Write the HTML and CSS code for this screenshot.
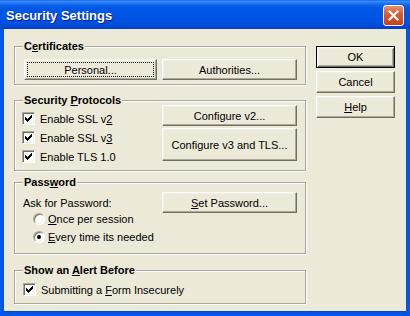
FILE: index.html
```html
<!DOCTYPE html>
<html lang="en">
<head>
  <meta charset="UTF-8" />
  <title>Security Settings</title>
  <link rel="stylesheet" href="styles.css">
</head>
<body>
  <div class="window">
    <div class="titlebar">
      <span class="title">Security Settings</span>
      <span class="close">
        <svg width="21" height="21" viewBox="0 0 21 21"><path d="M6.5 6.5l8 8M14.5 6.5l-8 8" stroke="#fff" stroke-width="2.2" stroke-linecap="square"/></svg>
      </span>
    </div>

    <div class="client">
      <div class="groups">
        <div class="group certs">
          <div class="group-title">C<u>e</u>rtificates</div>
          <div class="row">
            <button class="btn focused personal">Personal...</button>
            <button class="btn wide">Authorities...</button>
          </div>
        </div>

        <div class="group protocols">
          <div class="group-title">Security <u>P</u>rotocols</div>
          <div class="body">
            <div class="checks">
              <div class="check-row"><span class="box"><svg width="11" height="11" viewBox="0 0 11 11" shape-rendering="crispEdges"><path d="M2 4h1v3h-1zM3 5h1v3h-1zM4 6h1v3h-1zM5 5h1v3h-1zM6 4h1v3h-1zM7 3h1v3h-1zM8 2h1v3h-1z"/></svg></span><span>Enable SSL v<u>2</u></span></div>
              <div class="check-row"><span class="box"><svg width="11" height="11" viewBox="0 0 11 11" shape-rendering="crispEdges"><path d="M2 4h1v3h-1zM3 5h1v3h-1zM4 6h1v3h-1zM5 5h1v3h-1zM6 4h1v3h-1zM7 3h1v3h-1zM8 2h1v3h-1z"/></svg></span><span>Enable SSL v<u>3</u></span></div>
              <div class="check-row"><span class="box"><svg width="11" height="11" viewBox="0 0 11 11" shape-rendering="crispEdges"><path d="M2 4h1v3h-1zM3 5h1v3h-1zM4 6h1v3h-1zM5 5h1v3h-1zM6 4h1v3h-1zM7 3h1v3h-1zM8 2h1v3h-1z"/></svg></span><span>Enable TLS 1.0</span></div>
            </div>
            <div class="configs">
              <button class="btn">Configure v2...</button>
              <button class="btn tall">Configure v3 and TLS...</button>
            </div>
          </div>
        </div>

        <div class="group password">
          <div class="group-title">Pass<u>w</u>ord</div>
          <div class="ask">
            <span>Ask for Password:</span>
            <button class="btn wide"><span><u>S</u>et Password...</span></button>
          </div>
          <div class="radios">
            <div class="radio-row"><span class="radio"></span><span><u>O</u>nce per session</span></div>
            <div class="radio-row"><span class="radio on"></span><span><u>E</u>very time its needed</span></div>
          </div>
        </div>

        <div class="group alert">
          <div class="group-title">Show an <u>A</u>lert Before</div>
          <div class="check-row"><span class="box"><svg width="11" height="11" viewBox="0 0 11 11" shape-rendering="crispEdges"><path d="M2 4h1v3h-1zM3 5h1v3h-1zM4 6h1v3h-1zM5 5h1v3h-1zM6 4h1v3h-1zM7 3h1v3h-1zM8 2h1v3h-1z"/></svg></span><span>Submitting a <u>F</u>orm Insecurely</span></div>
        </div>
      </div>

      <div class="actions">
        <button class="btn default">OK</button>
        <button class="btn">Cancel</button>
        <button class="btn"><span><u>H</u>elp</span></button>
      </div>
    </div>
  </div>
</body>
</html>
```

FILE: styles.css
```css
* {
  box-sizing: border-box;
}
body {
  margin: 0;
  background: #fff;
  font-family: "Liberation Sans", Arial, sans-serif;
  font-size: 11px;
  color: #000;
}
.window {
  width: 410px;
  height: 316px;
  display: flex;
  flex-direction: column;
}
.titlebar {
  flex: none;
  height: 29px;
  display: flex;
  align-items: center;
  justify-content: space-between;
  padding: 2px 6px 0 6px;
  background: linear-gradient(to bottom, #0A5DE8 0px, #3E8CF7 1px, #2779F3 3px, #0F63EB 5px, #0058E6 8px, #0055E5 15px, #0052E0 22px, #0049D6 26px, #003DC5 29px);
}
.title {
  color: #fff;
  font-weight: bold;
  font-size: 13px;
  text-shadow: 1px 1px 0 #0A1E87;
}
.close {
  width: 21px;
  height: 21px;
  border: 1px solid #fff;
  border-radius: 3px;
  background: linear-gradient(to bottom, #E7906C, #D65A32 45%, #C8401C);
  display: flex;
  align-items: center;
  justify-content: center;
}
.close svg {
  margin: -1px;
}
.client {
  flex: 1;
  display: flex;
  gap: 10px;
  padding: 17px 11px 0 10px;
  background: #ECE9D8;
  border: 4px solid #0056E7;
  border-top: 0;
  box-shadow: inset 0 -1px 0 #0645C8;
}
.groups {
  width: 292px;
}
.actions {
  width: 79px;
  display: flex;
  flex-direction: column;
  gap: 3px;
}
.actions .btn {
  height: 22px;
}

/* group boxes */
.group {
  border: 1px solid #ACA899;
  box-shadow: inset 1px 1px 0 #fff, 1px 1px 0 #fff;
  padding: 0 8px;
}
.group-title {
  display: table;
  margin: -7px 0 -4px 0;
  padding: 0 1px;
  background: #ECE9D8;
  font-weight: bold;
  line-height: 13px;
}
.certs {
  padding-bottom: 4px;
}
.protocols {
  margin-top: 15px;
  padding-bottom: 4px;
}
.password {
  margin-top: 11px;
  padding-bottom: 7px;
}
.alert {
  margin-top: 16px;
  padding-bottom: 4px;
}

.certs .row {
  display: flex;
  gap: 5px;
  margin: 10px 0 0 1px;
}
.certs .btn {
  height: 21px;
}
.personal {
  width: 133px;
}
.wide {
  width: 135px;
  height: 21px;
}

.protocols .body {
  display: flex;
  justify-content: space-between;
  align-items: flex-start;
}
.checks {
  margin: 6px 0 0 -1px;
}
.check-row {
  height: 19px;
  display: flex;
  align-items: center;
  gap: 5px;
}
.alert .check-row {
  margin-top: 7px;
}
.configs {
  width: 135px;
  margin-top: 2px;
  display: flex;
  flex-direction: column;
  gap: 2px;
}
.configs .btn {
  height: 21px;
}
.configs .tall {
  height: 33px;
}

.ask {
  display: flex;
  justify-content: space-between;
  align-items: center;
  margin-top: 7px;
}
.radios {
  margin: -3px 0 0 10px;
}
.radio-row {
  height: 18px;
  display: flex;
  align-items: center;
  gap: 3px;
}

/* classic controls */
.btn {
  display: flex;
  align-items: center;
  justify-content: center;
  padding: 0;
  font: inherit;
  color: #000;
  background: #ECE9D8;
  border: 1px solid;
  border-color: #fff #716F64 #716F64 #fff;
  box-shadow: inset -1px -1px 0 #ACA899, inset 1px 1px 0 #F1EFE2;
}
.btn.default {
  border-color: #000;
  box-shadow: inset 1px 1px 0 #fff, inset -1px -1px 0 #716F64, inset 2px 2px 0 #F1EFE2, inset -2px -2px 0 #ACA899;
}
.btn.focused {
  outline: 1px dotted #000;
  outline-offset: -4px;
}
.box {
  flex: none;
  width: 13px;
  height: 13px;
  background: #fff;
  border: 1px solid;
  border-color: #ACA899 #fff #fff #ACA899;
  box-shadow: inset 1px 1px 0 #716F64, inset -1px -1px 0 #F1EFE2;
  display: flex;
}
.radio {
  flex: none;
  width: 12px;
  height: 12px;
  border-radius: 50%;
  background: #fff;
  border: 1px solid;
  border-color: #ACA899 #fff #fff #ACA899;
  box-shadow: inset 1px 1px 0 #716F64, inset -1px -1px 0 #F1EFE2;
  display: flex;
  align-items: center;
  justify-content: center;
}
.radio.on::after {
  content: "";
  width: 4px;
  height: 4px;
  border-radius: 50%;
  background: #000;
}
```
